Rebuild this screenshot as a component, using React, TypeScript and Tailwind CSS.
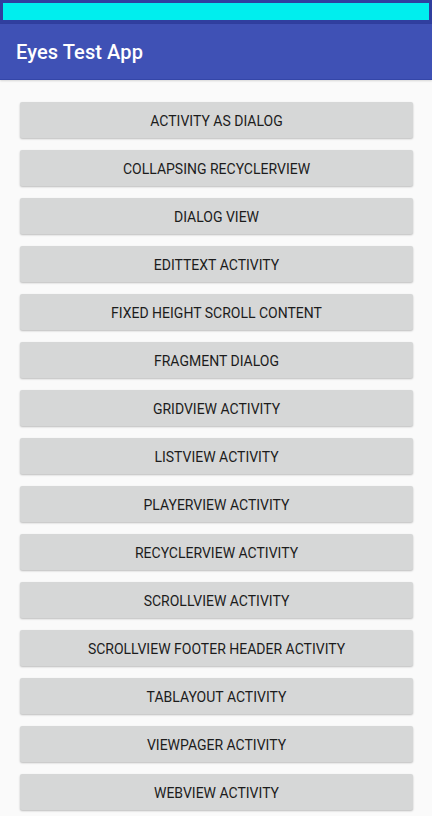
import React from "react";

const items = [
  "ACTIVITY AS DIALOG",
  "COLLAPSING RECYCLERVIEW",
  "DIALOG VIEW",
  "EDITTEXT ACTIVITY",
  "FIXED HEIGHT SCROLL CONTENT",
  "FRAGMENT DIALOG",
  "GRIDVIEW ACTIVITY",
  "LISTVIEW ACTIVITY",
  "PLAYERVIEW ACTIVITY",
  "RECYCLERVIEW ACTIVITY",
  "SCROLLVIEW ACTIVITY",
  "SCROLLVIEW FOOTER HEADER ACTIVITY",
  "TABLAYOUT ACTIVITY",
  "VIEWPAGER ACTIVITY",
  "WEBVIEW ACTIVITY",
];

export default function App() {
  return (
    <div
      className="w-[432px] h-[816px] overflow-hidden bg-[#fafafa] flex flex-col"
      style={{ fontFamily: "Roboto, 'Liberation Sans', sans-serif" }}
    >
      <div className="h-[24px] bg-[#303f9f] px-[3px] pt-[3px] pb-[4px] shrink-0">
        <div className="h-full bg-[#00eeee]" />
      </div>
      <div className="h-[56px] bg-[#3f51b5] border-b border-[#3446a8] flex items-center px-[16px] shrink-0 shadow-[0_1px_2px_rgba(0,0,0,0.15)]">
        <span className="text-white text-[20px] font-medium tracking-[0.1px]">Eyes Test App</span>
      </div>
      <div className="flex flex-col gap-[12px] pt-[22px] px-[20px]">
        {items.map((t) => (
          <div
            key={t}
            className="h-[36px] w-[393px] bg-[#d6d7d7] rounded-[2px] shadow-[0_1px_2px_rgba(0,0,0,0.25)] flex items-center justify-center pt-[2px] text-[14px] font-normal text-[#1c1c1c] tracking-normal shrink-0"
          >
            {t}
          </div>
        ))}
      </div>
    </div>
  );
}
